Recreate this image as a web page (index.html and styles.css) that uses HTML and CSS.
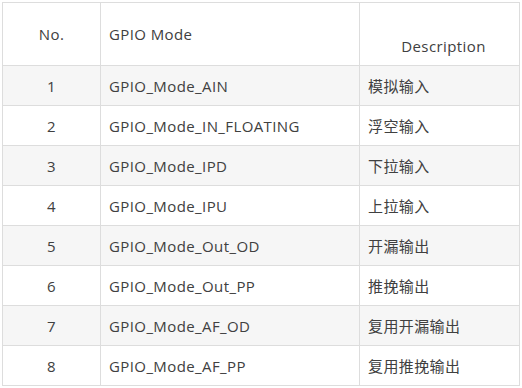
FILE: index.html
```html
<!DOCTYPE html>
<html>
<head>
<meta charset="utf-8">
<link rel="stylesheet" href="styles.css">
</head>
<body>
<table class="gpio">
  <colgroup>
    <col class="c-no">
    <col class="c-mode">
    <col class="c-desc">
  </colgroup>
  <thead>
    <tr class="head">
      <th class="no">No.</th>
      <th class="mode">GPIO Mode</th>
      <th class="desc">Description</th>
    </tr>
  </thead>
  <tbody>
    <tr class="odd"><td class="no">1</td><td>GPIO_Mode_AIN</td><td>模拟输入</td></tr>
    <tr><td class="no">2</td><td>GPIO_Mode_IN_FLOATING</td><td>浮空输入</td></tr>
    <tr class="odd"><td class="no">3</td><td>GPIO_Mode_IPD</td><td>下拉输入</td></tr>
    <tr><td class="no">4</td><td>GPIO_Mode_IPU</td><td>上拉输入</td></tr>
    <tr class="odd"><td class="no">5</td><td>GPIO_Mode_Out_OD</td><td>开漏输出</td></tr>
    <tr><td class="no">6</td><td>GPIO_Mode_Out_PP</td><td>推挽输出</td></tr>
    <tr class="odd"><td class="no">7</td><td>GPIO_Mode_AF_OD</td><td>复用开漏输出</td></tr>
    <tr><td class="no">8</td><td>GPIO_Mode_AF_PP</td><td>复用推挽输出</td></tr>
  </tbody>
</table>
</body>
</html>
```
FILE: styles.css
```css
html, body {
  margin: 0;
  padding: 0;
  background: #ffffff;
}
body {
  padding: 2px 0 0 2px;
  font-family: "Open Sans", "Noto Sans CJK SC", sans-serif;
  font-size: 15px;
  letter-spacing: 0.4px;
  color: #404040;
}
.gpio {
  border-collapse: collapse;
  table-layout: fixed;
  width: 517px;
}
.c-no { width: 98px; }
.c-mode { width: 259px; }
.c-desc { width: 160px; }
.gpio th, .gpio td {
  border: 1px solid #dddddd;
  padding: 0 8px;
  font-weight: normal;
  text-align: left;
  vertical-align: middle;
  line-height: 20px;
  white-space: nowrap;
}
.gpio td {
  height: 39px;
}
.gpio .head th {
  height: 62px;
}
.gpio .no {
  text-align: center;
}
.gpio .head th.desc {
  height: 53px;
  text-align: center;
  vertical-align: bottom;
  padding-bottom: 9px;
  padding-left: 16px;
}
.gpio tr.odd td {
  background: #f6f6f6;
}
```
